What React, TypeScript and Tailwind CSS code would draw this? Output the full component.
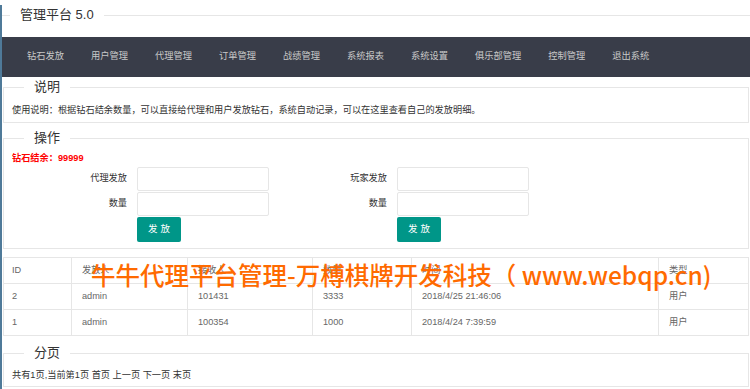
import React from 'react';

const navItems = ['钻石发放', '用户管理', '代理管理', '订单管理', '战绩管理', '系统报表', '系统设置', '俱乐部管理', '控制管理', '退出系统'];

const rows = [
  { id: '2', from: 'admin', to: '101431', num: '3333', time: '2018/4/25 21:46:06', type: '用户' },
  { id: '1', from: 'admin', to: '100354', num: '1000', time: '2018/4/24 7:39:59', type: '用户' },
];

const FieldBox: React.FC<{ title: string; className?: string; children: React.ReactNode }> = ({ title, className, children }) => (
  <fieldset className={`mx-[1px] border border-[#e6e6e6] ${className || ''}`}>
    <legend className="ml-[20px] px-[10px] text-[13px] leading-[20px] text-[#333]">{title}</legend>
    {children}
  </fieldset>
);

export default function App() {
  return (
    <div
      className="relative min-h-[389px] bg-white border-l-2 border-[#4f7a99] text-[9.2px] text-[#333]"
      style={{ fontFamily: '"Liberation Sans", Arial, "Noto Sans CJK SC", sans-serif' }}
    >
      {/* page title */}
      <fieldset className="mt-[5px] mb-[12px] border-t border-[#e6e6e6]">
        <legend className="ml-[8px] px-[10px] text-[13px] leading-[20px] text-[#333]">管理平台 5.0</legend>
      </fieldset>

      {/* top nav */}
      <div className="h-[40px] bg-[#393D49] flex items-center pl-[25px] gap-[27px]">
        {navItems.map((n) => (
          <span key={n} className="text-[9.25px] text-[#c8c8c8]">{n}</span>
        ))}
      </div>

      <FieldBox title="说明">
        <div className="pt-[3px] pb-[2px] px-[8px] leading-[20px]">
          使用说明：根据钻石结余数量，可以直接给代理和用户发放钻石，系统自动记录，可以在这里查看自己的发放明细。
        </div>
      </FieldBox>

      <FieldBox title="操作" className="mt-[5px]">
        <div className="pt-[3px] pb-[6px] px-[8px]">
          <p className="leading-[15px] font-bold text-[#ff0000]">钻石结余：99999</p>
          <div className="flex mt-[1px]">
            {[['代理发放', '数量'], ['玩家发放', '数量']].map((labels, i) => (
              <div key={i} className="w-[260px] flex flex-col gap-[1px]">
                {labels.map((l) => (
                  <div key={l} className="flex items-center">
                    <label className="w-[115px] text-right text-[#333]">{l}</label>
                    <input className="ml-[10px] w-[132px] h-[24px] border border-[#e6e6e6] rounded-[2px] bg-white" />
                  </div>
                ))}
                <div className="pl-[125px]">
                  <button className="w-[44px] h-[25px] bg-[#009688] text-white text-[9.5px] tracking-[3px] pl-[3px] rounded-[2px]">发放</button>
                </div>
              </div>
            ))}
          </div>
        </div>
      </FieldBox>

      {/* record table */}
      <table className="mt-[8px] ml-[1px] w-[746px] table-fixed border-collapse text-[#666]">
        <colgroup>
          <col className="w-[68px]" />
          <col className="w-[116px]" />
          <col className="w-[125px]" />
          <col className="w-[99px]" />
          <col className="w-[247px]" />
          <col />
        </colgroup>
        <thead>
          <tr className="h-[26px]">
            {['ID', '发放人', '接收人', '数量', '时间', '类型'].map((h, i) => (
              <th key={h} className={`border border-[#e6e6e6] ${i === 0 ? 'px-[8px]' : 'px-[10px]'} text-left font-normal`}>{h}</th>
            ))}
          </tr>
        </thead>
        <tbody>
          {rows.map((r) => (
            <tr key={r.id} className="h-[26px]">
              <td className="border border-[#e6e6e6] px-[8px]">{r.id}</td>
              <td className="border border-[#e6e6e6] px-[10px]">{r.from}</td>
              <td className="border border-[#e6e6e6] px-[10px]">{r.to}</td>
              <td className="border border-[#e6e6e6] px-[10px]">{r.num}</td>
              <td className="border border-[#e6e6e6] px-[10px]">{r.time}</td>
              <td className="border border-[#e6e6e6] px-[10px]">{r.type}</td>
            </tr>
          ))}
        </tbody>
      </table>

      <FieldBox title="分页" className="mt-[7px]">
        <div className="pt-[2px] pb-[1px] px-[8px] leading-[20px]">
          共有1页,当前第1页 首页 上一页 下一页 末页
        </div>
      </FieldBox>

      {/* watermark */}
      <div
        className="absolute left-[89px] top-[255px] text-[24.5px] leading-[30px] font-medium text-[#ff6a00] whitespace-nowrap pointer-events-none"
        style={{ fontFamily: '"Noto Sans CJK SC", "Liberation Sans", sans-serif' }}
      >
        牛牛代理平台管理-万榑棋牌开发科技（ www.webqp.cn)
      </div>
    </div>
  );
}
